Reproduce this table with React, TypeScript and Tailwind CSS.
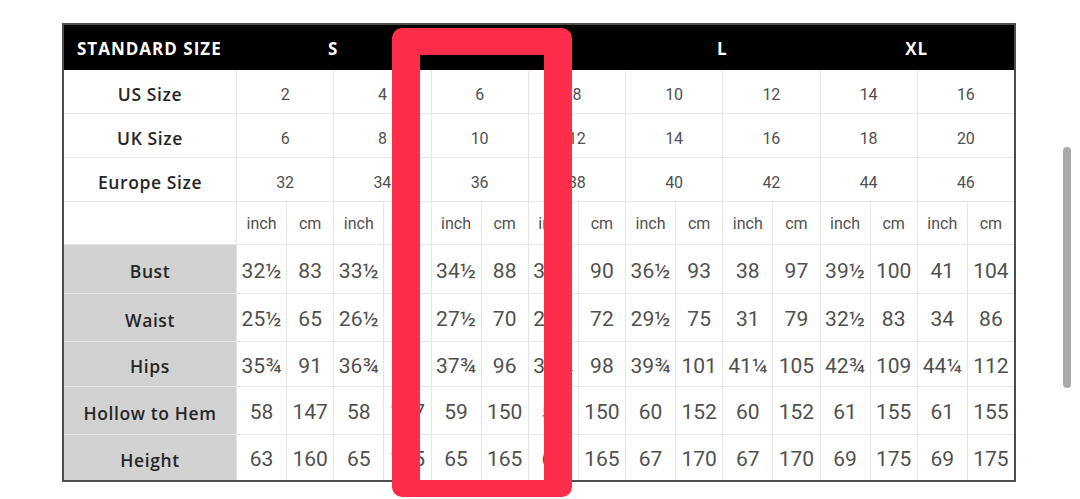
import React from 'react';

const sizes = [
  { label: 'US Size', values: ['2', '4', '6', '8', '10', '12', '14', '16'] },
  { label: 'UK Size', values: ['6', '8', '10', '12', '14', '16', '18', '20'] },
  { label: 'Europe Size', values: ['32', '34', '36', '38', '40', '42', '44', '46'] },
];

const measures = [
  { label: 'Bust', values: ['32½', '83', '33½', '85', '34½', '88', '35½', '90', '36½', '93', '38', '97', '39½', '100', '41', '104'] },
  { label: 'Waist', values: ['25½', '65', '26½', '67', '27½', '70', '28½', '72', '29½', '75', '31', '79', '32½', '83', '34', '86'] },
  { label: 'Hips', values: ['35¾', '91', '36¾', '93', '37¾', '96', '38¾', '98', '39¾', '101', '41¼', '105', '42¾', '109', '44¼', '112'] },
  { label: 'Hollow to Hem', values: ['58', '147', '58', '147', '59', '150', '59', '150', '60', '152', '60', '152', '61', '155', '61', '155'] },
  { label: 'Height', values: ['63', '160', '65', '165', '65', '165', '65', '165', '67', '170', '67', '170', '69', '175', '69', '175'] },
];

const labelFont = "font-['Open_Sans','Liberation_Sans',sans-serif] font-semibold tracking-[0.6px] text-[#262626]";
const valueFont = "font-['Roboto','Liberation_Sans',sans-serif] text-[#505050]";

export default function App() {
  return (
    <div className="relative w-[1080px] h-[499px] overflow-hidden bg-white pt-[23px] pl-[62px]">
      <div className="w-[954px] border-2 border-[#4d4d4d]">
        {/* header */}
        <div className="grid grid-cols-[172px_repeat(8,50fr_47fr)] h-[45px] bg-black text-white font-['Open_Sans','Liberation_Sans',sans-serif] font-bold text-[17px] tracking-[1px] items-center pt-[2px]">
          <div className="pl-[13px] whitespace-nowrap">STANDARD SIZE</div>
          <div className="col-span-4 text-center">S</div>
          <div className="col-span-4 text-center"></div>
          <div className="col-span-4 text-center">L</div>
          <div className="col-span-4 text-center">XL</div>
        </div>

        {/* body */}
        <div className="grid grid-cols-[172px_repeat(8,50fr_47fr)] grid-rows-[43px_43px_43px_42px_48px_47px_44px_47px_45px] gap-px bg-[#e6e6e6]">
          {sizes.map((row) => (
            <React.Fragment key={row.label}>
              <div className={`bg-white flex items-center justify-center pt-[6px] text-[17.5px] ${labelFont}`}>{row.label}</div>
              {row.values.map((v, i) => (
                <div key={i} className={`col-span-2 bg-white flex items-center justify-center pt-[6px] text-[16px] ${valueFont}`}>
                  {v}
                </div>
              ))}
            </React.Fragment>
          ))}

          {/* units */}
          <div className="bg-white"></div>
          {Array.from({ length: 8 }).map((_, i) => (
            <React.Fragment key={i}>
              <div className={`bg-white flex items-center justify-center pt-[2px] text-[16px] ${valueFont}`}>inch</div>
              <div className={`bg-white flex items-center justify-center pt-[2px] text-[16px] ${valueFont}`}>cm</div>
            </React.Fragment>
          ))}

          {measures.map((row) => (
            <React.Fragment key={row.label}>
              <div className={`bg-[#d2d2d2] flex items-center justify-center pt-[5px] text-[17.5px] whitespace-nowrap ${labelFont}`}>{row.label}</div>
              {row.values.map((v, i) => (
                <div key={i} className={`bg-white flex items-center justify-center pt-[5px] text-[21px] whitespace-nowrap ${valueFont}`}>
                  {v}
                </div>
              ))}
            </React.Fragment>
          ))}
        </div>
      </div>

      {/* highlight marker */}
      <div className="absolute left-[392px] top-[28px] w-[180px] h-[469px] rounded-[10px] border-x-[28px] border-t-[27px] border-b-[17px] border-[#fe2d4a]"></div>

      {/* scrollbar */}
      <div className="absolute left-[1063px] top-[147px] w-[8px] h-[241px] rounded-full bg-[#a9a9a9]"></div>
    </div>
  );
}
